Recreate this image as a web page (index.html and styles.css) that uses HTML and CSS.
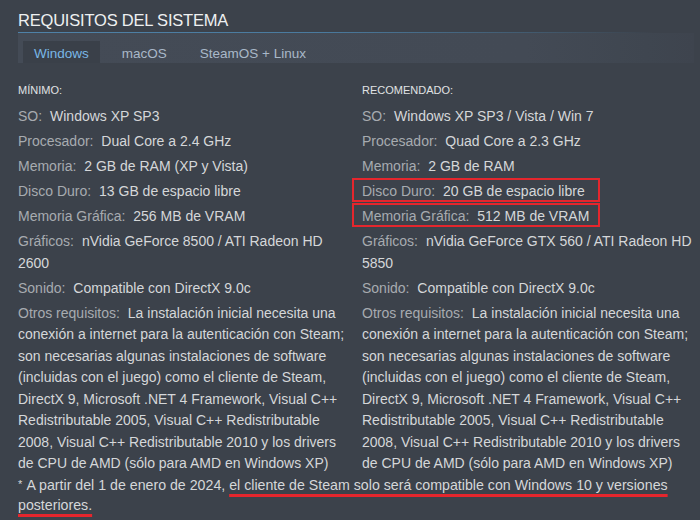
FILE: index.html
```html
<!DOCTYPE html>
<html lang="es">
<head>
<meta charset="utf-8">
<title>Requisitos del sistema</title>
<link rel="stylesheet" href="styles.css">
</head>
<body>
<div class="page">
  <h2 class="title">REQUISITOS DEL SISTEMA</h2>
  <div class="tabs">
    <span class="tab active">Windows</span>
    <span class="tab">macOS</span>
    <span class="tab">SteamOS + Linux</span>
  </div>
  <div class="cols">
    <div class="col">
      <div class="head">MÍNIMO:</div>
      <ul class="list">
        <li><span class="lbl">SO:</span> Windows XP SP3</li>
        <li><span class="lbl">Procesador:</span> Dual Core a 2.4 GHz</li>
        <li><span class="lbl">Memoria:</span> 2 GB de RAM (XP y Vista)</li>
        <li><span class="lbl">Disco Duro:</span> 13 GB de espacio libre</li>
        <li><span class="lbl">Memoria Gráfica:</span> 256 MB de VRAM</li>
        <li><span class="lbl">Gráficos:</span> nVidia GeForce 8500 / ATI Radeon HD 2600</li>
        <li><span class="lbl">Sonido:</span> Compatible con DirectX 9.0c</li>
        <li><span class="lbl">Otros requisitos:</span> La instalación inicial necesita una conexión a internet para la autenticación con Steam; son necesarias algunas instalaciones de software (incluidas con el juego) como el cliente de Steam, DirectX 9, Microsoft .NET 4 Framework, Visual C++ Redistributable 2005, Visual C++ Redistributable 2008, Visual C++ Redistributable 2010 y los drivers de CPU de AMD (sólo para AMD en Windows XP)</li>
      </ul>
    </div>
    <div class="col">
      <div class="head">RECOMENDADO:</div>
      <ul class="list">
        <li><span class="lbl">SO:</span> Windows XP SP3 / Vista / Win 7</li>
        <li><span class="lbl">Procesador:</span> Quad Core a 2.3 GHz</li>
        <li><span class="lbl">Memoria:</span> 2 GB de RAM</li>
        <li class="marked"><span class="lbl">Disco Duro:</span> 20 GB de espacio libre</li>
        <li class="marked"><span class="lbl">Memoria Gráfica:</span> 512 MB de VRAM</li>
        <li><span class="lbl">Gráficos:</span> nVidia GeForce GTX 560 / ATI Radeon HD 5850</li>
        <li><span class="lbl">Sonido:</span> Compatible con DirectX 9.0c</li>
        <li><span class="lbl">Otros requisitos:</span> La instalación inicial necesita una conexión a internet para la autenticación con Steam; son necesarias algunas instalaciones de software (incluidas con el juego) como el cliente de Steam, DirectX 9, Microsoft .NET 4 Framework, Visual C++ Redistributable 2005, Visual C++ Redistributable 2008, Visual C++ Redistributable 2010 y los drivers de CPU de AMD (sólo para AMD en Windows XP)</li>
      </ul>
    </div>
  </div>
  <p class="note"><span class="star">*</span> A partir del 1 de enero de 2024, <span class="hl">el cliente de Steam solo será compatible con Windows 10 y versiones posteriores.</span></p>
</div>
</body>
</html>
```

FILE: styles.css
```css
html, body {
  margin: 0;
  padding: 0;
  background: #3c424b;
}

.page {
  width: 700px;
  height: 520px;
  box-sizing: border-box;
  padding: 10px 6px 0 18px;
  font-family: "Liberation Sans", Arial, sans-serif;
  color: #d6d7d8;
  overflow: hidden;
}

.title {
  margin: 0;
  font-size: 16.5px;
  letter-spacing: -0.2px;
  font-weight: normal;
  line-height: 21px;
  color: #eef0f1;
  padding-bottom: 1px;
  border-bottom: 1.5px solid transparent;
  border-image: linear-gradient(to right, #4f82a8 0%, #4a7a9e 45%, rgba(74,122,158,0.35) 80%, rgba(74,122,158,0) 94%) 1;
}

.tabs {
  display: flex;
  gap: 11px;
  height: 30px;
  padding: 8px 0 0 5px;
  box-sizing: border-box;
  background: linear-gradient(to right, #444b56 0%, #434a55 75%, #3f4650 93%, #3e444e 100%);
  margin-bottom: 20px;
}

.tab {
  display: block;
  padding: 4px 11px 0 11px;
  font-size: 13.5px;
  line-height: 17px;
  color: #a9b8c8;
}

.tab.active {
  background: #3a4049;
  color: #79b7e6;
}

.cols {
  display: grid;
  grid-template-columns: 332px 332px;
  column-gap: 12px;
}

.head {
  font-size: 11px;
  line-height: 14px;
  color: #e0e2e4;
  margin-bottom: 9px;
}

.list {
  list-style: none;
  margin: 0;
  padding: 0;
  font-size: 14px;
  line-height: 21.5px;
}

.list li {
  margin-bottom: 3.5px;
  color: #d5d7d9;
}

.list li:last-child {
  margin-bottom: 0;
}

.lbl {
  color: #a7abb0;
  margin-right: 4px;
}

.marked {
  position: relative;
}

.marked::after {
  content: "";
  position: absolute;
  left: -10px;
  top: -3px;
  width: 244px;
  height: 20px;
  border: 2px solid #e5262d;
}

.note {
  margin: -1px 0 0 0;
  font-size: 14.2px;
  line-height: 20px;
  color: #d5d7d9;
}

.star {
  font-size: 11px;
  vertical-align: 2px;
  margin-right: 1px;
}

.hl {
  text-decoration: underline;
  text-decoration-color: #e5262d;
  text-decoration-thickness: 2.5px;
  text-underline-offset: 4px;
}
```
